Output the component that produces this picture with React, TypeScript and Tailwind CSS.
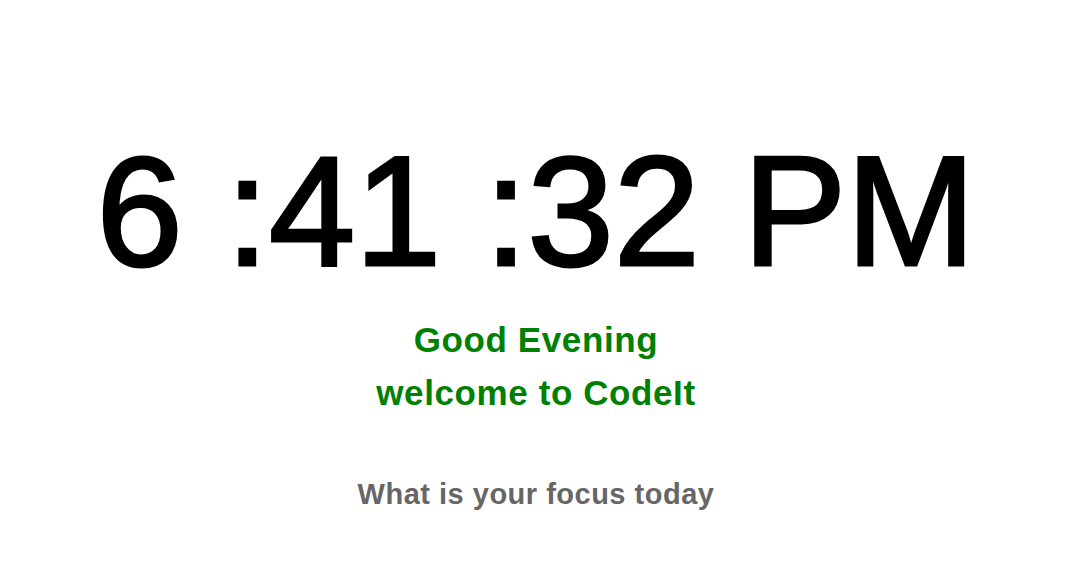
import React from 'react';

const App = () => {
  return (
    <main
      className="w-full h-[580px] bg-white flex flex-col items-center pt-[134px]"
      style={{ fontFamily: '"Comic Sans MS", "Liberation Sans", Arial, sans-serif' }}
    >
      {/* Clock */}
      <h1 className="text-[155px] leading-none font-normal text-black whitespace-pre [-webkit-text-stroke:3px_black]">
        6 :41 :32 PM
      </h1>

      {/* Greeting */}
      <div className="mt-6 flex flex-col items-center text-[35px] leading-[53px] font-bold tracking-[0.6px] text-[#008000]">
        <p>Good Evening</p>
        <p>welcome to CodeIt</p>
      </div>

      {/* Focus prompt */}
      <p className="mt-[55px] text-[29px] leading-10 font-bold tracking-[0.5px] text-[#666666]">
        What is your focus today
      </p>
    </main>
  );
};

export default App;
